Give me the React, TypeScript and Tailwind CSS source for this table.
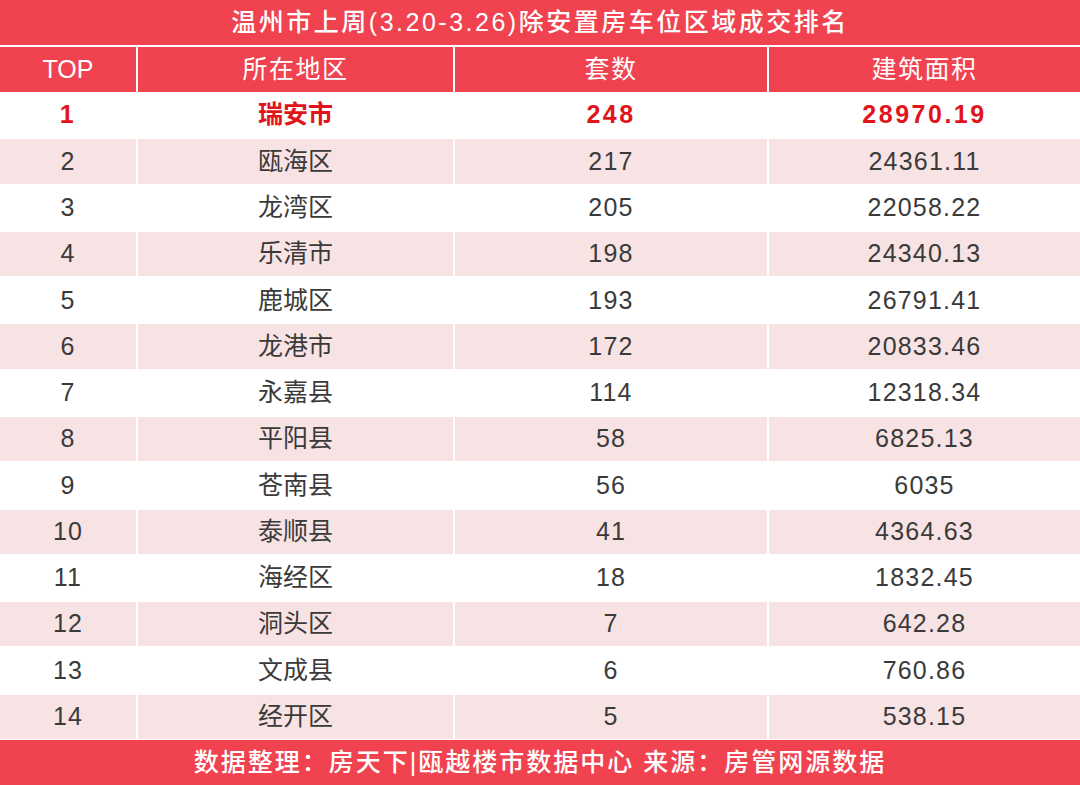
import React from 'react';

// ─── Data ─────────────────────────────────────────────────────────────────────
const rows = [
  { top: 1, area: '瑞安市', count: 248, size: '28970.19' },
  { top: 2, area: '瓯海区', count: 217, size: '24361.11' },
  { top: 3, area: '龙湾区', count: 205, size: '22058.22' },
  { top: 4, area: '乐清市', count: 198, size: '24340.13' },
  { top: 5, area: '鹿城区', count: 193, size: '26791.41' },
  { top: 6, area: '龙港市', count: 172, size: '20833.46' },
  { top: 7, area: '永嘉县', count: 114, size: '12318.34' },
  { top: 8, area: '平阳县', count: 58, size: '6825.13' },
  { top: 9, area: '苍南县', count: 56, size: '6035' },
  { top: 10, area: '泰顺县', count: 41, size: '4364.63' },
  { top: 11, area: '海经区', count: 18, size: '1832.45' },
  { top: 12, area: '洞头区', count: 7, size: '642.28' },
  { top: 13, area: '文成县', count: 6, size: '760.86' },
  { top: 14, area: '经开区', count: 5, size: '538.15' },
];

const font = { fontFamily: "'Liberation Sans', 'Noto Sans CJK SC', sans-serif" };
const cols = 'grid grid-cols-[136px_315px_312px_1fr] gap-x-[2px]';

export default function App() {
  return (
    <div style={font} className="w-[1080px] h-[785px] bg-white flex flex-col overflow-hidden">
      {/* title */}
      <div className="h-[45px] bg-[#f0424f] flex items-center justify-center text-white text-[25px] font-medium tracking-[2.5px]">
        温州市上周(3.20-3.26)除安置房车位区域成交排名
      </div>

      {/* header */}
      <div className={`${cols} h-[45px] mt-[2px] text-white text-[25px]`}>
        <div className="bg-[#f0424f] flex items-center justify-center">TOP</div>
        {['所在地区', '套数', '建筑面积'].map((h) => (
          <div key={h} className="bg-[#f0424f] flex items-center justify-center tracking-[1.5px]">
            {h}
          </div>
        ))}
      </div>

      {/* body */}
      <div className="h-[648px] flex flex-col">
        {rows.map((r, i) => {
          const first = i === 0;
          const pink = i % 2 === 1;
          const cell = `flex items-center justify-center ${pink ? 'bg-[#f8e3e4]' : 'bg-white'}`;
          const num = first ? 'tracking-[2.5px]' : 'tracking-[1.2px]';
          return (
            <div
              key={r.top}
              className={`${cols} flex-1 py-[1px] text-[25px] ${
                first ? 'text-[#e1141c] font-bold' : 'text-[#3a3a3a]'
              }`}
            >
              <div className={`${cell} ${num}`}>{r.top}</div>
              <div className={cell}>{r.area}</div>
              <div className={`${cell} ${num}`}>{r.count}</div>
              <div className={`${cell} ${num}`}>{r.size}</div>
            </div>
          );
        })}
      </div>

      {/* footer */}
      <div className="h-[45px] bg-[#f0424f] flex items-center justify-center text-white text-[25px] font-medium tracking-[2px]">
        数据整理：房天下|瓯越楼市数据中心 来源：房管网源数据
      </div>
    </div>
  );
}
